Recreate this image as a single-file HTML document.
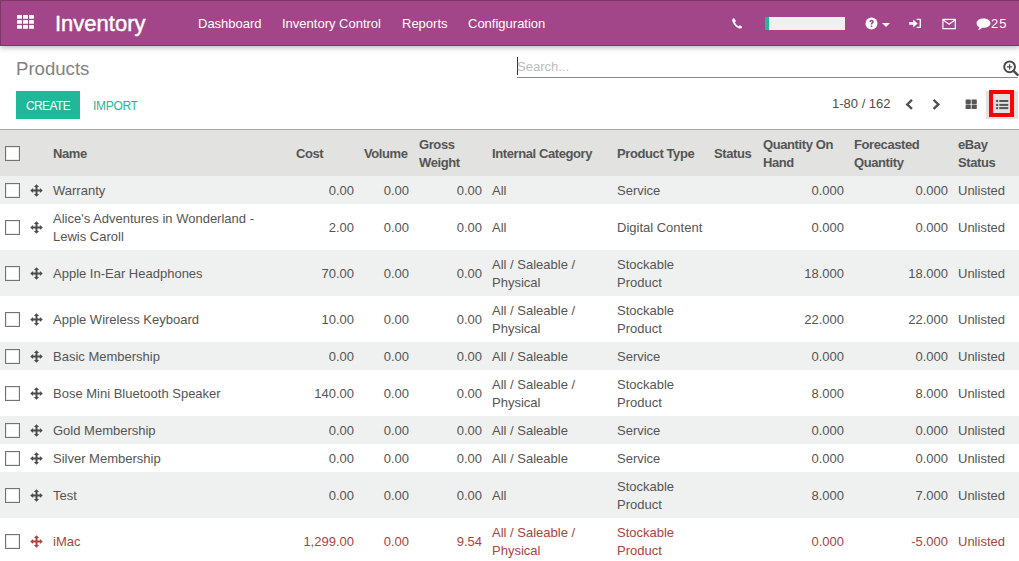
<!DOCTYPE html>
<html><head><meta charset="utf-8">
<style>
*{box-sizing:border-box;margin:0;padding:0}
html,body{width:1019px;height:561px;overflow:hidden;background:#fff;font-family:"Liberation Sans",sans-serif;font-size:13px;color:#555}
.nav{position:absolute;left:0;top:0;width:1019px;height:46px;background:#a24689;border-top:1px solid #7e3569;border-left:1px solid #7e3569;border-bottom:1px solid #7e3569;box-shadow:0 2px 5px rgba(0,0,0,.25)}
.abs{position:absolute;white-space:nowrap}
.brand{left:55px;top:11px;font-size:22px;color:#fff;-webkit-text-stroke:0.45px #fff}
.menu{top:16px;color:#fff;font-size:13px}
.title{left:16px;top:58px;font-size:18.6px;color:#828282}
.btn{left:16px;top:91px;width:64px;height:28px;background:#21b799;color:#fff;font-size:12px;text-align:center;line-height:30px;letter-spacing:-0.6px}
.imp{left:93px;top:91px;line-height:30px;color:#21b799;font-size:12px;letter-spacing:-0.3px}
.search{left:517px;top:57px;width:501px;height:21px;border-bottom:1px solid #888}
.search .ph{position:absolute;left:0px;top:2px;color:#bbb;font-size:13px}
.search .cur{position:absolute;left:0;top:0;width:1px;height:18px;background:#333}
table{position:absolute;left:0;top:129px;border-collapse:collapse;table-layout:fixed;width:1019px}
thead tr{background:#e2e2e0}
th{font-weight:bold;text-align:left;padding:6px 5px 4px;line-height:18px;height:46px;vertical-align:middle;border-top:1px solid #a8a8a8;letter-spacing:-0.4px}
td{padding:6px 5px 4px;line-height:18px;vertical-align:middle}
td.n{text-align:right}
tbody tr:nth-child(odd){background:#eff0f0}
tr.red td{color:#a94442}
.mv{display:block;margin-left:4px;fill:#4c4c4c}
tr.red .mv{fill:#a94442}
td:first-child,th:first-child{padding:0 0 0 5px}
td:nth-child(2){padding:0}
.cb{display:block;width:15px;height:15px;border:1px solid #727272;background:#fff;box-shadow:inset 0 0 0 1px rgba(0,0,0,.08)}
</style></head><body>
<div class="nav"></div>
<div class="abs" style="left:17px;top:15px;width:17px;height:14px">
<svg width="17" height="14" viewBox="0 0 17 14"><g fill="#fff"><rect x="0" y="0" width="5" height="3.8" rx="0.4"/><rect x="6" y="0" width="5" height="3.8" rx="0.4"/><rect x="12" y="0" width="5" height="3.8" rx="0.4"/><rect x="0" y="5" width="5" height="3.8" rx="0.4"/><rect x="6" y="5" width="5" height="3.8" rx="0.4"/><rect x="12" y="5" width="5" height="3.8" rx="0.4"/><rect x="0" y="10" width="5" height="3.8" rx="0.4"/><rect x="6" y="10" width="5" height="3.8" rx="0.4"/><rect x="12" y="10" width="5" height="3.8" rx="0.4"/></g></svg></div>
<div class="abs brand">Inventory</div>
<div class="abs menu" style="left:198px">Dashboard</div>
<div class="abs menu" style="left:282px">Inventory Control</div>
<div class="abs menu" style="left:402px">Reports</div>
<div class="abs menu" style="left:468px">Configuration</div>
<!-- phone -->
<svg class="abs" style="left:731.6px;top:18.4px" width="10.8" height="10.8" viewBox="0 0 12 12"><path fill="#fff" d="M1.2 0.6C0.2 1.3 -0.3 2.6 0.9 4.9C2.2 7.6 4.6 10.3 7.3 11.3C9 11.9 10.2 11.6 11.2 10.8C11.6 10.4 11.5 9.9 11.1 9.6L9.3 8.3C8.9 8 8.4 8.1 8.1 8.5L7.5 9.2C5.8 8.4 4 6.5 3.2 4.6L3.9 4.1C4.3 3.8 4.4 3.3 4.1 2.9L2.6 0.8C2.2 0.3 1.7 0.3 1.2 0.6Z"/></svg>
<!-- progress -->
<div class="abs" style="left:765px;top:17px;width:80px;height:13px;background:#f0f0f0"><div style="width:4px;height:13px;background:#21b799"></div></div>
<!-- help -->
<svg class="abs" style="left:864.5px;top:17px" width="13" height="13" viewBox="0 0 13 13"><circle cx="6.5" cy="6.5" r="6" fill="#fff"/><path d="M4.4 4.9C4.4 3.6 5.4 2.8 6.6 2.8C7.9 2.8 8.8 3.6 8.8 4.7C8.8 6.1 7.3 6.2 7.3 7.3V7.6H5.7V7.1C5.7 5.6 7.1 5.5 7.1 4.8C7.1 4.4 6.9 4.2 6.5 4.2C6.1 4.2 5.9 4.5 5.9 4.9Z M5.7 8.4H7.3V9.9H5.7Z" fill="#a24689"/></svg>
<svg class="abs" style="left:882px;top:23px" width="8" height="4" viewBox="0 0 8 4"><path d="M0 0H8L4 4Z" fill="#fff"/></svg>
<!-- sign-in -->
<svg class="abs" style="left:909px;top:18px" width="13" height="11" viewBox="0 0 13 11"><path fill="#fff" d="M0.2 4.1H4.2V1.4L8.6 5.4L4.2 9.4V6.7H0.2Z"/><path fill="none" stroke="#fff" stroke-width="1.3" stroke-linejoin="round" d="M7.6 1.4H11.3V9.4H7.6"/></svg>
<!-- envelope -->
<svg class="abs" style="left:942px;top:18px" width="15" height="12" viewBox="0 0 15 12"><rect x="0.9" y="1.4" width="12.4" height="9.3" fill="none" stroke="#fff" stroke-width="1.2"/><path d="M1.2 2L7.1 6.3L13 2" fill="none" stroke="#fff" stroke-width="1.2"/></svg>
<!-- comment -->
<svg class="abs" style="left:976px;top:18px" width="15" height="13" viewBox="0 0 15 13"><path fill="#fff" d="M7.5 0.6C11.4 0.6 14.4 2.6 14.4 5.2C14.4 7.8 11.4 9.8 7.5 9.8C7 9.8 6.5 9.8 6 9.7C5 10.8 3.6 11.8 1.8 12.2C2.6 11.4 3.2 10.4 3.3 9.2C1.6 8.4 0.6 6.9 0.6 5.2C0.6 2.6 3.6 0.6 7.5 0.6Z"/></svg>
<div class="abs" style="left:991px;top:16px;color:#fff;font-size:13px;letter-spacing:0.9px">25</div>

<div class="abs title">Products</div>
<div class="abs btn">CREATE</div>
<div class="abs imp">IMPORT</div>
<div class="abs search"><div class="cur"></div><div class="ph">Search...</div></div>
<!-- search plus -->
<svg class="abs" style="left:1001px;top:59px" width="18" height="17" viewBox="0 0 18 17"><circle cx="8.6" cy="7.8" r="5.4" fill="none" stroke="#4c4c4c" stroke-width="2"/><path d="M12.6 11.8L16.6 15.8" stroke="#4c4c4c" stroke-width="2.4" stroke-linecap="round"/><path d="M8.6 5.2V10.4M6 7.8H11.2" stroke="#4c4c4c" stroke-width="1.2"/></svg>
<div class="abs" style="left:832px;top:96px;color:#4c4c4c">1-80 / 162</div>
<svg class="abs" style="left:904px;top:98px" width="11" height="13" viewBox="0 0 11 13"><path d="M8 1.9L3.2 6.4L8 10.9" fill="none" stroke="#505050" stroke-width="2.3"/></svg>
<svg class="abs" style="left:931px;top:98px" width="11" height="13" viewBox="0 0 11 13"><path d="M2.6 1.9L7.4 6.4L2.6 10.9" fill="none" stroke="#505050" stroke-width="2.3"/></svg>
<svg class="abs" style="left:965px;top:99px" width="13" height="11" viewBox="0 0 13 11"><g fill="#555"><rect x="0.6" y="0.4" width="5.2" height="4.5" rx="0.6"/><rect x="6.6" y="0.4" width="5.2" height="4.5" rx="0.6"/><rect x="0.6" y="5.5" width="5.2" height="4.5" rx="0.6"/><rect x="6.6" y="5.5" width="5.2" height="4.5" rx="0.6"/></g></svg>
<div class="abs" style="left:986px;top:91px;width:32px;height:28px;background:#e2e2e2"></div>
<div class="abs" style="left:989px;top:90px;width:25px;height:27px;border:4px solid #f00"></div>
<svg class="abs" style="left:995px;top:99px" width="14" height="11" viewBox="0 0 14 11"><g fill="#555"><circle cx="2.1" cy="2" r="1.2"/><circle cx="2.1" cy="5.9" r="1.2"/><circle cx="2.1" cy="9.1" r="1.2"/><rect x="4.3" y="1" width="9" height="2"/><rect x="4.3" y="4.9" width="9" height="2"/><rect x="4.3" y="8.1" width="9" height="2"/></g></svg>

<table>
<colgroup><col style="width:26px"><col style="width:22px"><col style="width:243px"><col style="width:68px"><col style="width:55px"><col style="width:73px"><col style="width:125px"><col style="width:97px"><col style="width:49px"><col style="width:91px"><col style="width:104px"><col style="width:66px"></colgroup>
<thead><tr><th><span class="cb"></span></th><th></th><th>Name</th><th>Cost</th><th>Volume</th><th>Gross Weight</th><th>Internal Category</th><th>Product Type</th><th>Status</th><th>Quantity On Hand</th><th>Forecasted Quantity</th><th>eBay Status</th></tr></thead>
<tbody>
<tr><td><span class="cb"></span></td><td><svg class="mv" width="13" height="13" viewBox="0 0 13 13"><path d="M6.5 0.2L9.1 3.1H7.5V5.5H9.9V3.9L12.8 6.5L9.9 9.1V7.5H7.5V9.9H9.1L6.5 12.8L3.9 9.9H5.5V7.5H3.1V9.1L0.2 6.5L3.1 3.9V5.5H5.5V3.1H3.9Z"/></svg></td><td><div>Warranty</div></td><td class="n"><div>0.00</div></td><td class="n"><div>0.00</div></td><td class="n"><div>0.00</div></td><td><div>All</div></td><td><div>Service</div></td><td></td><td class="n"><div>0.000</div></td><td class="n"><div>0.000</div></td><td><div>Unlisted</div></td></tr>
<tr><td><span class="cb"></span></td><td><svg class="mv" width="13" height="13" viewBox="0 0 13 13"><path d="M6.5 0.2L9.1 3.1H7.5V5.5H9.9V3.9L12.8 6.5L9.9 9.1V7.5H7.5V9.9H9.1L6.5 12.8L3.9 9.9H5.5V7.5H3.1V9.1L0.2 6.5L3.1 3.9V5.5H5.5V3.1H3.9Z"/></svg></td><td><div>Alice's Adventures in Wonderland - Lewis Caroll</div></td><td class="n"><div>2.00</div></td><td class="n"><div>0.00</div></td><td class="n"><div>0.00</div></td><td><div>All</div></td><td><div>Digital Content</div></td><td></td><td class="n"><div>0.000</div></td><td class="n"><div>0.000</div></td><td><div>Unlisted</div></td></tr>
<tr><td><span class="cb"></span></td><td><svg class="mv" width="13" height="13" viewBox="0 0 13 13"><path d="M6.5 0.2L9.1 3.1H7.5V5.5H9.9V3.9L12.8 6.5L9.9 9.1V7.5H7.5V9.9H9.1L6.5 12.8L3.9 9.9H5.5V7.5H3.1V9.1L0.2 6.5L3.1 3.9V5.5H5.5V3.1H3.9Z"/></svg></td><td><div>Apple In-Ear Headphones</div></td><td class="n"><div>70.00</div></td><td class="n"><div>0.00</div></td><td class="n"><div>0.00</div></td><td><div>All / Saleable / Physical</div></td><td><div>Stockable Product</div></td><td></td><td class="n"><div>18.000</div></td><td class="n"><div>18.000</div></td><td><div>Unlisted</div></td></tr>
<tr><td><span class="cb"></span></td><td><svg class="mv" width="13" height="13" viewBox="0 0 13 13"><path d="M6.5 0.2L9.1 3.1H7.5V5.5H9.9V3.9L12.8 6.5L9.9 9.1V7.5H7.5V9.9H9.1L6.5 12.8L3.9 9.9H5.5V7.5H3.1V9.1L0.2 6.5L3.1 3.9V5.5H5.5V3.1H3.9Z"/></svg></td><td><div>Apple Wireless Keyboard</div></td><td class="n"><div>10.00</div></td><td class="n"><div>0.00</div></td><td class="n"><div>0.00</div></td><td><div>All / Saleable / Physical</div></td><td><div>Stockable Product</div></td><td></td><td class="n"><div>22.000</div></td><td class="n"><div>22.000</div></td><td><div>Unlisted</div></td></tr>
<tr><td><span class="cb"></span></td><td><svg class="mv" width="13" height="13" viewBox="0 0 13 13"><path d="M6.5 0.2L9.1 3.1H7.5V5.5H9.9V3.9L12.8 6.5L9.9 9.1V7.5H7.5V9.9H9.1L6.5 12.8L3.9 9.9H5.5V7.5H3.1V9.1L0.2 6.5L3.1 3.9V5.5H5.5V3.1H3.9Z"/></svg></td><td><div>Basic Membership</div></td><td class="n"><div>0.00</div></td><td class="n"><div>0.00</div></td><td class="n"><div>0.00</div></td><td><div>All / Saleable</div></td><td><div>Service</div></td><td></td><td class="n"><div>0.000</div></td><td class="n"><div>0.000</div></td><td><div>Unlisted</div></td></tr>
<tr><td><span class="cb"></span></td><td><svg class="mv" width="13" height="13" viewBox="0 0 13 13"><path d="M6.5 0.2L9.1 3.1H7.5V5.5H9.9V3.9L12.8 6.5L9.9 9.1V7.5H7.5V9.9H9.1L6.5 12.8L3.9 9.9H5.5V7.5H3.1V9.1L0.2 6.5L3.1 3.9V5.5H5.5V3.1H3.9Z"/></svg></td><td><div>Bose Mini Bluetooth Speaker</div></td><td class="n"><div>140.00</div></td><td class="n"><div>0.00</div></td><td class="n"><div>0.00</div></td><td><div>All / Saleable / Physical</div></td><td><div>Stockable Product</div></td><td></td><td class="n"><div>8.000</div></td><td class="n"><div>8.000</div></td><td><div>Unlisted</div></td></tr>
<tr><td><span class="cb"></span></td><td><svg class="mv" width="13" height="13" viewBox="0 0 13 13"><path d="M6.5 0.2L9.1 3.1H7.5V5.5H9.9V3.9L12.8 6.5L9.9 9.1V7.5H7.5V9.9H9.1L6.5 12.8L3.9 9.9H5.5V7.5H3.1V9.1L0.2 6.5L3.1 3.9V5.5H5.5V3.1H3.9Z"/></svg></td><td><div>Gold Membership</div></td><td class="n"><div>0.00</div></td><td class="n"><div>0.00</div></td><td class="n"><div>0.00</div></td><td><div>All / Saleable</div></td><td><div>Service</div></td><td></td><td class="n"><div>0.000</div></td><td class="n"><div>0.000</div></td><td><div>Unlisted</div></td></tr>
<tr><td><span class="cb"></span></td><td><svg class="mv" width="13" height="13" viewBox="0 0 13 13"><path d="M6.5 0.2L9.1 3.1H7.5V5.5H9.9V3.9L12.8 6.5L9.9 9.1V7.5H7.5V9.9H9.1L6.5 12.8L3.9 9.9H5.5V7.5H3.1V9.1L0.2 6.5L3.1 3.9V5.5H5.5V3.1H3.9Z"/></svg></td><td><div>Silver Membership</div></td><td class="n"><div>0.00</div></td><td class="n"><div>0.00</div></td><td class="n"><div>0.00</div></td><td><div>All / Saleable</div></td><td><div>Service</div></td><td></td><td class="n"><div>0.000</div></td><td class="n"><div>0.000</div></td><td><div>Unlisted</div></td></tr>
<tr><td><span class="cb"></span></td><td><svg class="mv" width="13" height="13" viewBox="0 0 13 13"><path d="M6.5 0.2L9.1 3.1H7.5V5.5H9.9V3.9L12.8 6.5L9.9 9.1V7.5H7.5V9.9H9.1L6.5 12.8L3.9 9.9H5.5V7.5H3.1V9.1L0.2 6.5L3.1 3.9V5.5H5.5V3.1H3.9Z"/></svg></td><td><div>Test</div></td><td class="n"><div>0.00</div></td><td class="n"><div>0.00</div></td><td class="n"><div>0.00</div></td><td><div>All</div></td><td><div>Stockable Product</div></td><td></td><td class="n"><div>8.000</div></td><td class="n"><div>7.000</div></td><td><div>Unlisted</div></td></tr>
<tr class="red"><td><span class="cb"></span></td><td><svg class="mv" width="13" height="13" viewBox="0 0 13 13"><path d="M6.5 0.2L9.1 3.1H7.5V5.5H9.9V3.9L12.8 6.5L9.9 9.1V7.5H7.5V9.9H9.1L6.5 12.8L3.9 9.9H5.5V7.5H3.1V9.1L0.2 6.5L3.1 3.9V5.5H5.5V3.1H3.9Z"/></svg></td><td><div>iMac</div></td><td class="n"><div>1,299.00</div></td><td class="n"><div>0.00</div></td><td class="n"><div>9.54</div></td><td><div>All / Saleable / Physical</div></td><td><div>Stockable Product</div></td><td></td><td class="n"><div>0.000</div></td><td class="n"><div>-5.000</div></td><td><div>Unlisted</div></td></tr>
</tbody></table>
</body></html>
